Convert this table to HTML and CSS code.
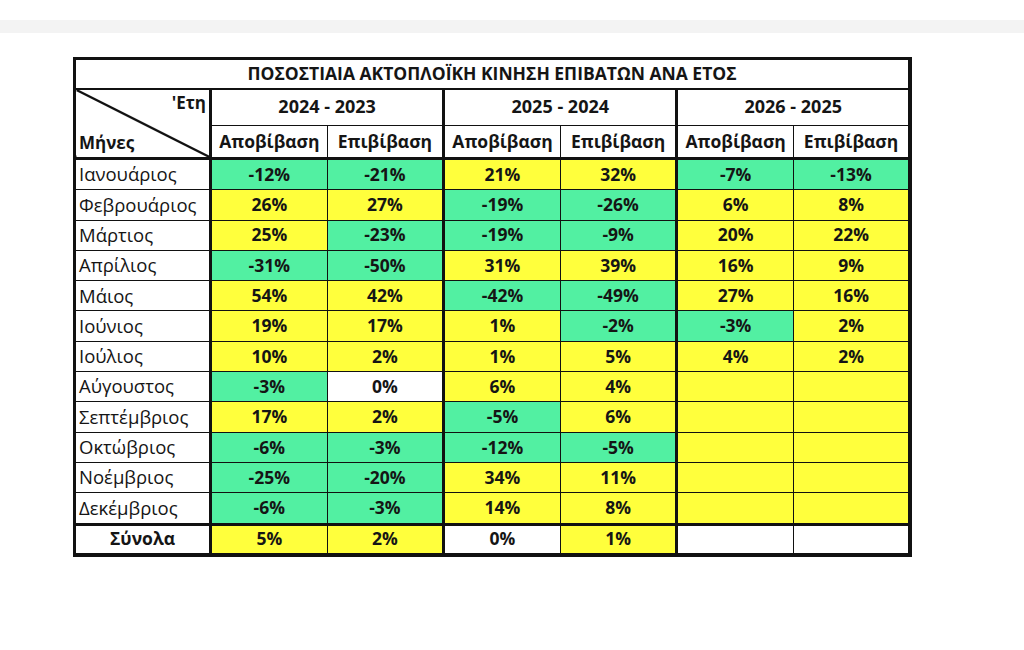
FILE: index.html
```html
<!DOCTYPE html>
<html lang="el">
<head>
<meta charset="utf-8">
<title>Ποσοστιαία ακτοπλοϊκή κίνηση επιβατών ανά έτος</title>
<link rel="stylesheet" href="styles.css">
</head>
<body>
<div class="topband"></div>
<main class="page">
<table class="stats">
  <colgroup>
    <col class="c-label">
    <col class="c-data"><col class="c-data">
    <col class="c-data"><col class="c-data">
    <col class="c-data"><col class="c-data">
  </colgroup>
  <thead>
    <tr class="r-title"><th colspan="7">ΠΟΣΟΣΤΙΑΙΑ ΑΚΤΟΠΛΟΪΚΗ ΚΙΝΗΣΗ ΕΠΙΒΑΤΩΝ ΑΝΑ ΕΤΟΣ</th></tr>
    <tr class="r-years">
      <th rowspan="2" class="corner"><div class="corner-in"><span class="c-top">'Ετη</span><span class="c-bot">Μήνες</span></div></th>
      <th colspan="2" class="g">2024 - 2023</th>
      <th colspan="2" class="g">2025 - 2024</th>
      <th colspan="2" class="g">2026 - 2025</th>
    </tr>
    <tr class="r-sub">
      <th>Αποβίβαση</th><th class="g">Επιβίβαση</th>
      <th>Αποβίβαση</th><th class="g">Επιβίβαση</th>
      <th>Αποβίβαση</th><th class="g">Επιβίβαση</th>
    </tr>
  </thead>
  <tbody>
    <tr><th class="month">Ιανουάριος</th><td class="n">-12%</td><td class="n g">-21%</td><td class="p">21%</td><td class="p g">32%</td><td class="n">-7%</td><td class="n g">-13%</td></tr>
    <tr><th class="month">Φεβρουάριος</th><td class="p">26%</td><td class="p g">27%</td><td class="n">-19%</td><td class="n g">-26%</td><td class="p">6%</td><td class="p g">8%</td></tr>
    <tr><th class="month">Μάρτιος</th><td class="p">25%</td><td class="n g">-23%</td><td class="n">-19%</td><td class="n g">-9%</td><td class="p">20%</td><td class="p g">22%</td></tr>
    <tr><th class="month">Απρίλιος</th><td class="n">-31%</td><td class="n g">-50%</td><td class="p">31%</td><td class="p g">39%</td><td class="p">16%</td><td class="p g">9%</td></tr>
    <tr><th class="month">Μάιος</th><td class="p">54%</td><td class="p g">42%</td><td class="n">-42%</td><td class="n g">-49%</td><td class="p">27%</td><td class="p g">16%</td></tr>
    <tr><th class="month">Ιούνιος</th><td class="p">19%</td><td class="p g">17%</td><td class="p">1%</td><td class="n g">-2%</td><td class="n">-3%</td><td class="p g">2%</td></tr>
    <tr><th class="month">Ιούλιος</th><td class="p">10%</td><td class="p g">2%</td><td class="p">1%</td><td class="p g">5%</td><td class="p">4%</td><td class="p g">2%</td></tr>
    <tr><th class="month">Αύγουστος</th><td class="n">-3%</td><td class="z g">0%</td><td class="p">6%</td><td class="p g">4%</td><td class="p"></td><td class="p g"></td></tr>
    <tr><th class="month">Σεπτέμβριος</th><td class="p">17%</td><td class="p g">2%</td><td class="n">-5%</td><td class="p g">6%</td><td class="p"></td><td class="p g"></td></tr>
    <tr><th class="month">Οκτώβριος</th><td class="n">-6%</td><td class="n g">-3%</td><td class="n">-12%</td><td class="n g">-5%</td><td class="p"></td><td class="p g"></td></tr>
    <tr><th class="month">Νοέμβριος</th><td class="n">-25%</td><td class="n g">-20%</td><td class="p">34%</td><td class="p g">11%</td><td class="p"></td><td class="p g"></td></tr>
    <tr><th class="month">Δεκέμβριος</th><td class="n">-6%</td><td class="n g">-3%</td><td class="p">14%</td><td class="p g">8%</td><td class="p"></td><td class="p g"></td></tr>
  </tbody>
  <tfoot>
    <tr class="r-total"><th class="total">Σύνολα</th><td class="p">5%</td><td class="p g">2%</td><td class="z">0%</td><td class="p g">1%</td><td class="z"></td><td class="z g"></td></tr>
  </tfoot>
</table>
</main>
</body>
</html>
```

FILE: styles.css
```css
html, body {
  margin: 0;
  padding: 0;
  background: #ffffff;
}

body {
  font-family: "Open Sans", "Noto Sans", "DejaVu Sans", sans-serif;
  color: #151515;
}

.topband {
  margin-top: 20px;
  height: 13px;
  background: #f3f3f3;
}

.page {
  padding: 24px 0 0 73px;
}

.stats {
  border-collapse: collapse;
  table-layout: fixed;
  width: 836px;
  border: 3px solid #111;
  border-right-width: 4px;
  border-bottom-width: 4px;
}

.c-label { width: 136px; }
.c-data { width: 116.6px; }

.stats th,
.stats td {
  border: 1.5px solid #111;
  padding: 0;
  text-align: center;
  vertical-align: middle;
  font-weight: 700;
  font-size: 17.5px;
  line-height: 1;
  white-space: nowrap;
  background: #ffffff;
}

.stats .g {
  border-right-width: 3px;
}

.stats .r-title th {
  height: 28px;
  font-size: 17.5px;
  border-bottom-width: 2.5px;
}

.stats .r-years th {
  height: 32px;
  font-size: 18px;
  padding-bottom: 3px;
}

.stats .r-sub th {
  height: 31px;
  border-bottom-width: 3px;
}

.stats .corner {
  border-right-width: 3px;
  border-bottom-width: 3px;
  padding: 0;
  background: linear-gradient(to top right, transparent calc(50% - 1.5px), #111 calc(50% - 0.8px), #111 calc(50% + 0.8px), transparent calc(50% + 1.5px));
}

.corner-in {
  display: flex;
  flex-direction: column;
  justify-content: space-between;
  height: 62px;
  padding: 3px 3px 0 3px;
  box-sizing: border-box;
  font-size: 17px;
}

.c-top { align-self: flex-end; }
.c-bot { align-self: flex-start; padding-bottom: 2px; }

.stats .month {
  height: 29.3px;
  font-weight: 400;
  font-size: 18.5px;
  text-align: left;
  padding-left: 3px;
  border-right-width: 3px;
}

.stats tbody td {
  height: 29.3px;
  font-size: 17.5px;
}

.stats tfoot th,
.stats tfoot td {
  height: 27px;
  border-top-width: 3px;
}

.stats .total {
  font-weight: 700;
  text-align: center;
  font-size: 17.5px;
  border-right-width: 3px;
}

.stats .n { background: #52f0a2; }
.stats .p { background: #ffff3c; }
.stats .z { background: #ffffff; }
```
